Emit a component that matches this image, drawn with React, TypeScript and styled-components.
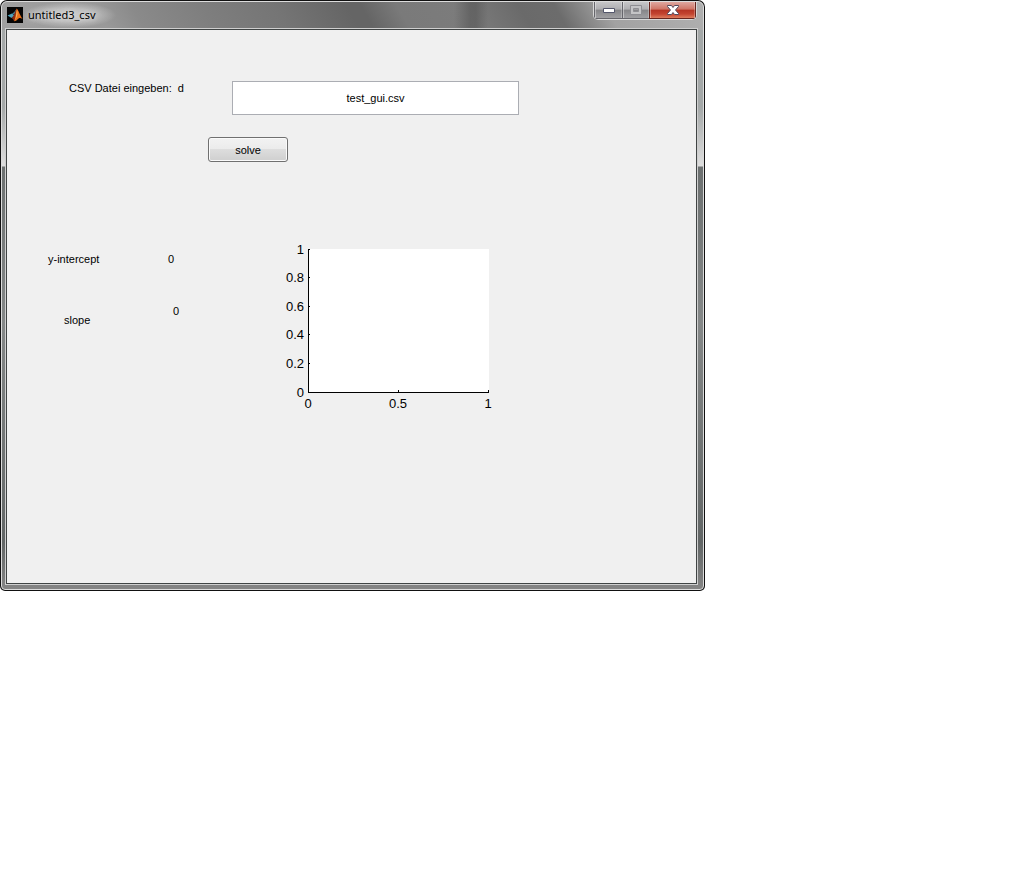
import React from "react";
import styled, { createGlobalStyle } from "styled-components";

const GlobalStyle = createGlobalStyle`
  * { box-sizing: border-box; }
  body { margin: 0; background: #fff; color: #000; font-family: "Liberation Sans", Arial, sans-serif; font-size: 11px; line-height: 14px; }
`;

const Window = styled.main`
  width: 100%;
  max-width: 705px;
  padding: 1px;
  border-radius: 7px 7px 5px 5px;
  background: #111;
`;

const Frame = styled.div`
  padding: 0 6px 5px 4px;
  border: 1px solid #dcdcdc;
  border-radius: 6px 6px 4px 4px;
  background:
    linear-gradient(90deg, transparent 452px, #56565699 468px, #56565699 474px, transparent 486px) 0 0 / 100% 27px no-repeat,
    linear-gradient(60deg, #a0a0a0 0, #999 15%, #8a8a8a 20%, #7e7e7e 30%, #757575 40%, #656565 50%, #656565 52%, #7a7a7a 57%, #7c7c7c 66%, #6a6a6a 74%, #6c6c6c 79%, #a2a2a2 86%, #b0b0b0 100%) 0 0 / 100% 28px no-repeat,
    linear-gradient(#a4a8a8 0, #a4a8a8 105px, #dedede 164px, #6c7070 165px, #858888 320px, #626666 540px, #858585 100%);
`;

const TitleBar = styled.header`
  display: flex;
  justify-content: space-between;
  height: 27px;
  padding-left: 1px;
`;

const Caption = styled.div`
  display: flex;
  align-items: center;
  gap: 1px;
  padding-bottom: 1px;
`;

const Title = styled.h1`
  margin: 0;
  padding: 4px 20px 4px 4px;
  background: radial-gradient(closest-side, #cccccc 0, #c4c4c4cc 50%, #b0b0b000 100%);
  font-family: "Noto Sans", "Segoe UI", sans-serif;
  font-size: 11px;
  font-weight: 400;
  line-height: 18px;
  text-shadow: 0 0 5px #ddd, 0 0 8px #ddd;
`;

const WindowButtons = styled.div`
  display: flex;
  height: 18px;
  border: 1px solid #d8d8d8;
  border-top: 0;
  border-radius: 0 0 5px 5px;
  background: #4a4a50;
  overflow: hidden;
`;

const WindowButton = styled.button<{ $width: number; $close?: boolean }>`
  display: flex;
  align-items: center;
  justify-content: center;
  width: ${(p) => p.$width}px;
  padding: 0;
  border: 1px solid ${(p) => (p.$close ? "#68251e" : "#66666c")};
  border-width: ${(p) => (p.$close ? "0 1px 1px" : "0 0 1px 1px")};
  box-shadow: inset 1px 0 0 #ffffff66, inset -1px 0 0 #ffffff44;
  background: ${(p) =>
    p.$close
      ? "linear-gradient(#dfa79f 0, #cf7566 45%, #b53424 50%, #c34430 75%, #dd7c5e 100%)"
      : "linear-gradient(#c6c6c8 0, #aeaeb1 45%, #858588 50%, #a0a0a3 100%)"};
`;

const Client = styled.section`
  min-height: 555px;
  padding: 51px 16px 16px 41px;
  border: 1px solid #404444;
  outline: 1px solid #cfcfcf;
  background: #f0f0f0;
`;

const FileRow = styled.div`
  display: flex;
  align-items: flex-start;
  gap: 48px;
  padding-left: 21px;
`;

const FileLabel = styled.label`
  width: 115px;
  white-space: pre;
`;

const FileInput = styled.input`
  width: 287px;
  height: 34px;
  padding: 0;
  border: 1px solid #abadb3;
  background: #fff;
  color: #000;
  font: inherit;
  text-align: center;
`;

const SolveButton = styled.button`
  display: block;
  width: 80px;
  height: 25px;
  margin: 22px 0 0 160px;
  padding: 0;
  border: 1px solid #707070;
  border-radius: 3px;
  box-shadow: inset 0 0 0 1px #fafafa;
  background: linear-gradient(#f2f2f2 0, #ebebeb 50%, #dddddd 50%, #cfcfcf 100%);
  color: #000;
  font: inherit;
`;

const ResultRow = styled.div`
  display: flex;
  align-items: flex-start;
  margin-top: 80px;
`;

const Results = styled.dl`
  display: grid;
  grid-template-columns: 120px 1fr;
  row-gap: 38px;
  width: 236px;
  margin: 0;
  padding-top: 10px;
`;

const Name = styled.dt<{ $indent?: boolean }>`
  padding: ${(p) => (p.$indent ? "9px 0 0 16px" : "0")};
`;

const Value = styled.dd<{ $indent?: boolean }>`
  margin: 0;
  padding-left: ${(p) => (p.$indent ? 5 : 0)}px;
`;

const Plot = styled.svg`
  display: block;
  width: 214px;
  height: 172px;
  font-family: "Liberation Sans", Arial, sans-serif;
  font-size: 13px;
`;

const yTicks = [
  { label: "1", y: 7 },
  { label: "0.8", y: 35 },
  { label: "0.6", y: 64 },
  { label: "0.4", y: 92 },
  { label: "0.2", y: 121 },
  { label: "0", y: 150 },
];

const xTicks = [
  { label: "0", x: 24 },
  { label: "0.5", x: 114 },
  { label: "1", x: 204 },
];

const MatlabIcon = () => (
  <svg width="16" height="16" viewBox="0 0 16 16" aria-hidden="true">
    <path fill="#050505" d="M0 0h16v16H0z" />
    <path fill="#4ea3bd" d="M0.500 8.500L5 6.500l2.500 2L4.500 11z" />
    <path fill="#3f7f96" d="M5 6.500C7 6 8 3.500 9.500 2L8 8z" />
    <path fill="#8a2c14" d="M4.500 11C7 9.500 8 4 9.700 1.500L10 10l-3 4-1-2z" />
    <path fill="#e8701c" d="M9.700 1.500C11.500 3 13 8.500 15.500 12c-2-1.500-3.500-1.500-5 .5-1 1-2 1.700-3.500 1.700C8.500 12 9 6 9.700 1.500z" />
    <path fill="#f9b45a" d="M9.900 3c1.200 2.500.8 6-1.700 10 .8-3 1-6 1.700-10z" />
  </svg>
);

export default function App() {
  return (
    <>
      <GlobalStyle />
      <Window>
        <Frame>
          <TitleBar>
            <Caption>
              <MatlabIcon />
              <Title>untitled3_csv</Title>
            </Caption>
            <WindowButtons>
              <WindowButton $width={28} aria-label="Minimize">
                <svg width="14" height="8" aria-hidden="true">
                  <path d="M1.500 2.500h11v4h-11z" fill="#fff" stroke="#53566b" />
                </svg>
              </WindowButton>
              <WindowButton $width={27} aria-label="Maximize" disabled>
                <svg width="12" height="10" aria-hidden="true">
                  <path d="M0.500 0.500h11v9h-11z M3.500 3.500h5v3h-5z" fill="#c4c4c6" fillRule="evenodd" stroke="#8e8e93" />
                </svg>
              </WindowButton>
              <WindowButton $width={47} $close aria-label="Close">
                <svg width="14" height="12" aria-hidden="true">
                  <path fill="#fff" stroke="#53495c" d="M1.500 1.500h4L7 3.500l1.500-2h4v1L9.500 6l3 3.500v1h-4L7 8.500l-1.500 2h-4v-1l3-3.500-3-3.500z" />
                </svg>
              </WindowButton>
            </WindowButtons>
          </TitleBar>
          <Client>
            <FileRow>
              <FileLabel htmlFor="csv-file">{"CSV Datei eingeben:  d"}</FileLabel>
              <FileInput id="csv-file" type="text" defaultValue="test_gui.csv" />
            </FileRow>
            <SolveButton type="button">solve</SolveButton>
            <ResultRow>
              <Results>
                <Name>y-intercept</Name>
                <Value>0</Value>
                <Name $indent>slope</Name>
                <Value $indent>0</Value>
              </Results>
              <Plot role="img" aria-label="Plot axes">
                <path d="M24 7h181v143H24z" fill="#fff" />
                <path d="M24.500 7v143.500H205" fill="none" stroke="#000" />
                {yTicks.map((t) => (
                  <g key={t.label}>
                    <path d={`M24 ${t.y + 0.5}h2`} stroke="#000" />
                    <text x="20" y={t.y + 5} textAnchor="end">{t.label}</text>
                  </g>
                ))}
                {xTicks.map((t) => (
                  <g key={t.label}>
                    <path d={`M${t.x + 0.5} 151v-3`} stroke="#000" />
                    <text x={t.x} y="166" textAnchor="middle">{t.label}</text>
                  </g>
                ))}
              </Plot>
            </ResultRow>
          </Client>
        </Frame>
      </Window>
    </>
  );
}
